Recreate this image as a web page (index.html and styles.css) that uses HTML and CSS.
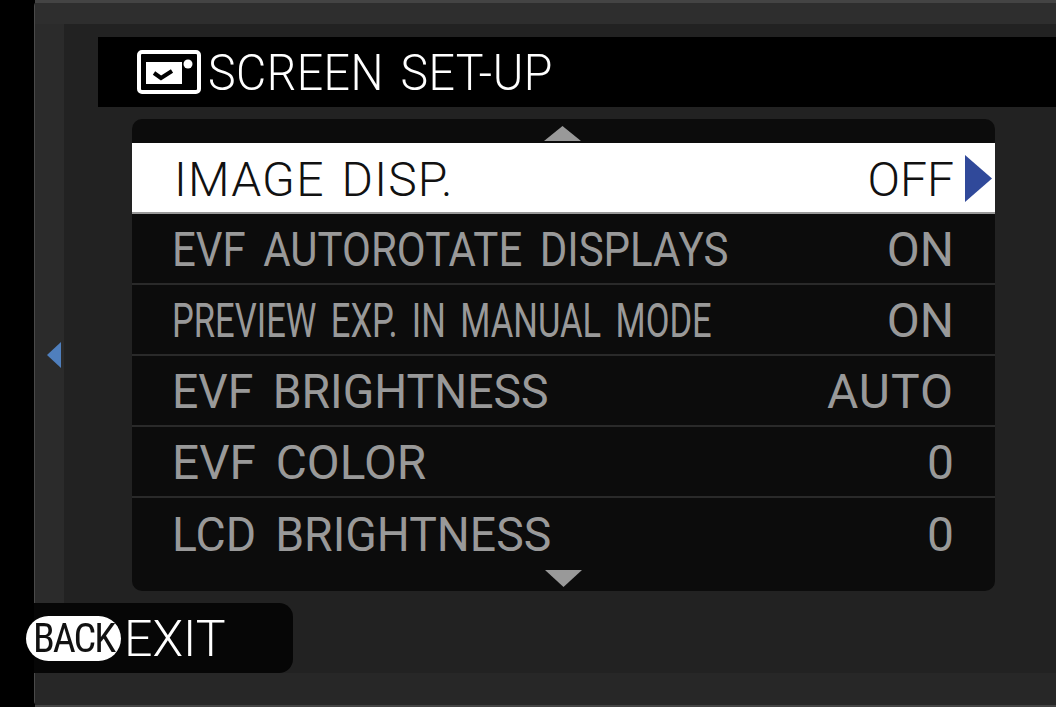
FILE: index.html
```html
<!DOCTYPE html>
<html lang="en">
<head>
    <meta charset="UTF-8">
    <meta name="viewport" content="width=device-width, initial-scale=1.0">
    <title>Screen Set-Up</title>
    <link rel="stylesheet" href="styles.css">
</head>
<body>
    <main class="screen">
        <div class="top-strip"></div>
        <div class="body">
            <div class="side">
                <svg class="side-arrow" width="14" height="26" viewBox="0 0 14 26"><polygon points="14,0 14,26 0,13"/></svg>
            </div>
            <div class="content">
                <header class="title">
                    <svg class="title-icon" width="64" height="44" viewBox="0 0 64 44">
                        <rect x="2" y="2" width="60" height="40" rx="3" fill="none" stroke="#fff" stroke-width="4"/>
                        <rect x="9" y="12" width="36" height="22" fill="#fff"/>
                        <path d="M17 23L24 28L35 21" fill="none" stroke="#000" stroke-width="4"/>
                        <circle cx="51" cy="14" r="4.5" fill="#fff"/>
                    </svg>
                    <span class="title-text">SCREEN SET-UP</span>
                </header>
                <section class="list">
                    <div class="arrow-row up"><svg width="37" height="15" viewBox="0 0 37 15"><polygon points="18.5,0 37,15 0,15"/></svg></div>
                    <div class="row selected">
                        <span class="label">IMAGE DISP.</span>
                        <span class="value">OFF</span>
                        <svg class="go" width="27" height="47" viewBox="0 0 27 47"><polygon points="0,0 27,23.5 0,47"/></svg>
                    </div>
                    <div class="row"><span class="label squeeze">EVF AUTOROTATE DISPLAYS</span><span class="value">ON</span></div>
                    <div class="row"><span class="label narrow">PREVIEW EXP. IN MANUAL MODE</span><span class="value">ON</span></div>
                    <div class="row"><span class="label">EVF BRIGHTNESS</span><span class="value auto">AUTO</span></div>
                    <div class="row"><span class="label wide">EVF COLOR</span><span class="value">0</span></div>
                    <div class="row"><span class="label">LCD BRIGHTNESS</span><span class="value">0</span></div>
                    <div class="arrow-row down"><svg width="37" height="17" viewBox="0 0 37 17"><polygon points="0,0 37,0 18.5,17"/></svg></div>
                </section>
                <footer class="footer">
                    <span class="back">BACK</span>
                    <span class="exit">EXIT</span>
                </footer>
            </div>
        </div>
        <div class="bottom-strip"></div>
    </main>
</body>
</html>
```
FILE: styles.css
```css
* {
    box-sizing: border-box;
}
html, body {
    margin: 0;
    padding: 0;
    width: 100%;
    height: 100%;
    background: #000;
    overflow: hidden;
    font-family: Roboto, "Liberation Sans", sans-serif;
}

.screen {
    height: 707px;
    margin-left: 34px;
    display: flex;
    flex-direction: column;
    background: #222;
    border-left: 1px solid #4a4a4a;
    border-radius: 6px 0 0 6px;
    filter: blur(.7px);
}
.top-strip {
    height: 24px;
    flex: none;
    background: #2e2e2e;
    border-top: 3px solid #444;
}
.bottom-strip {
    flex: 1;
    background: #272727;
    border-bottom: 2px solid #444;
}
.body {
    display: flex;
    flex: none;
}

.side {
    width: 29px;
    flex: none;
    background: #2b2b2b;
    display: flex;
    justify-content: flex-end;
    align-items: flex-start;
    padding: 318px 3px 0 0;
}
.side-arrow {
    fill: #4f7fbd;
}

.content {
    flex: 1;
    min-width: 0;
    padding-top: 13px;
}

.title {
    height: 70px;
    margin-left: 34px;
    padding-left: 39px;
    display: flex;
    align-items: center;
    gap: 7px;
    background: #000;
    color: #fff;
}
.title-text {
    padding-top: 2px;
    font-size: 50px;
    font-weight: 300;
    letter-spacing: .5px;
    word-spacing: 5px;
    transform: scaleX(.93);
    transform-origin: left center;
    white-space: nowrap;
}

.list {
    width: 863px;
    margin: 12px 0 0 68px;
    background: #0c0c0c;
    border-radius: 10px;
}
.arrow-row {
    display: flex;
    justify-content: center;
}
.arrow-row svg {
    fill: #999;
}
.arrow-row.up {
    height: 24px;
    padding: 7px 2px 0 0;
}
.arrow-row.down {
    height: 22px;
    padding: 1px 0 0 0;
}

.row {
    height: 71px;
    padding: 2px 41px 0 40px;
    display: flex;
    align-items: center;
    justify-content: space-between;
    border-bottom: 2px solid #2a2a2a;
    color: #999;
    font-size: 48px;
    font-weight: 400;
    white-space: nowrap;
}
.row:nth-last-child(2) {
    border-bottom: none;
}
.row .label {
    flex: 1;
    min-width: 0;
    word-spacing: 8px;
    transform-origin: left center;
    transform: scaleX(.965);
}
.row .label.wide {
    transform: scaleX(.995);
}
.row .label.squeeze {
    transform: scaleX(.875);
}
.row .label.narrow {
    transform: scaleX(.72);
}
.row .value {
    flex: none;
}
.row .value.auto {
    letter-spacing: 1px;
}

.row.selected {
    position: relative;
    padding: 4px 41px 0 42px;
    background: #fff;
    color: #111;
    font-weight: 300;
    border-bottom: 2px solid #999;
}
.row.selected .label {
    letter-spacing: 1.2px;
    word-spacing: 4px;
    transform: none;
}
.go {
    position: absolute;
    right: 3px;
    top: 12px;
    fill: #30499a;
}

.footer {
    width: 259px;
    height: 70px;
    margin: 12px 0 0 -30px;
    display: flex;
    align-items: center;
    background: #060606;
    border-radius: 0 14px 14px 0;
    color: #fff;
}
.back {
    width: 95px;
    height: 45px;
    margin-left: -8px;
    flex: none;
    display: flex;
    align-items: center;
    justify-content: center;
    background: #fff;
    color: #111;
    border-radius: 23px;
    font-size: 40px;
    font-weight: 400;
    font-stretch: condensed;
    letter-spacing: -2px;
}
.exit {
    margin-left: 3px;
    padding-top: 2px;
    font-size: 50px;
    font-weight: 300;
}
```
